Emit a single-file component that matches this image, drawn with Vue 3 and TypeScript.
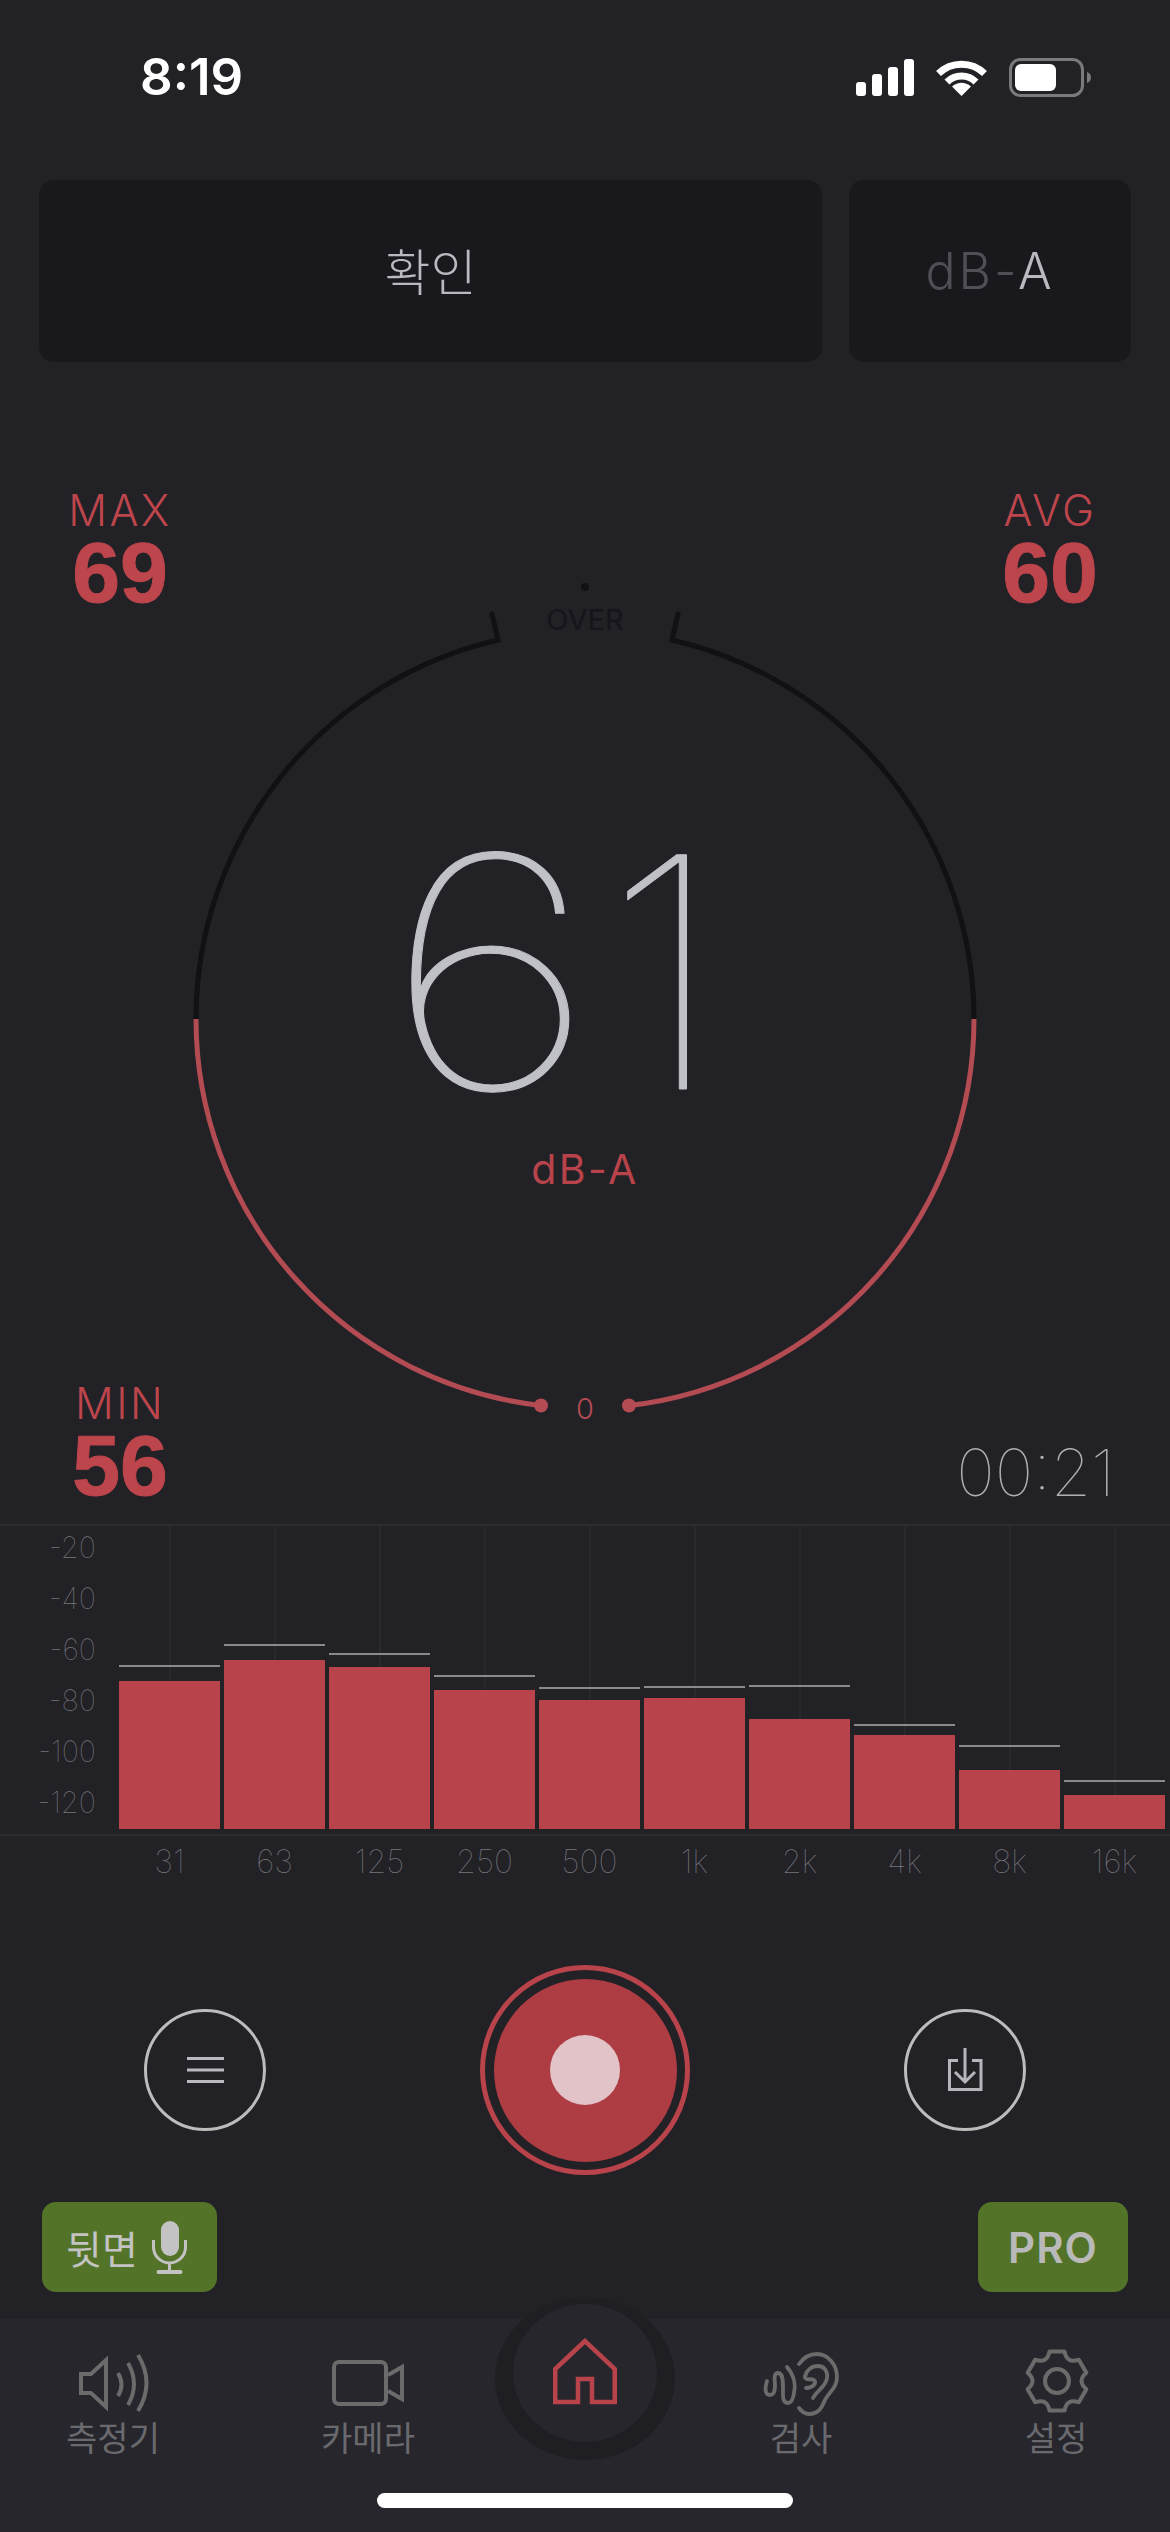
<script setup lang="ts">
interface Band {
  label: string
  level: number
  peakGap: number
}

const bands: Band[] = [
  { label: '31', level: 148, peakGap: 14 },
  { label: '63', level: 169, peakGap: 14 },
  { label: '125', level: 162, peakGap: 12 },
  { label: '250', level: 139, peakGap: 13 },
  { label: '500', level: 129, peakGap: 11 },
  { label: '1k', level: 131, peakGap: 10 },
  { label: '2k', level: 110, peakGap: 32 },
  { label: '4k', level: 94, peakGap: 9 },
  { label: '8k', level: 59, peakGap: 23 },
  { label: '16k', level: 34, peakGap: 13 },
]

const scale = ['-20', '-40', '-60', '-80', '-100', '-120']

// six flat teeth joined by curved dips, for the settings icon
function gearPath(cx: number, cy: number): string {
  const at = (angle: number, r: number) =>
    `${(cx + Math.cos(angle) * r).toFixed(1)} ${(cy + Math.sin(angle) * r).toFixed(1)}`
  const step = Math.PI / 3
  let d = ''
  for (let i = 0; i < 6; i++) {
    const a = step * i - Math.PI / 2
    d += `${i === 0 ? 'M' : 'L'}${at(a - 0.25, 30.5)} L${at(a + 0.25, 30.5)} `
    d += `Q${at(a + step / 2, 19.6)} ${at(a + step - 0.25, 30.5)} `
  }
  return d + 'Z'
}
</script>

<template>
  <div class="phone">
    <header class="status">
      <span class="time">8:19</span>
      <div class="status-icons">
        <svg width="58" height="37" viewBox="0 0 58 37" fill="#fff">
          <rect x="0" y="23" width="10" height="14" rx="3" />
          <rect x="16" y="15" width="10" height="22" rx="3" />
          <rect x="32" y="8" width="10" height="29" rx="3" />
          <rect x="48" y="0" width="10" height="37" rx="3" />
        </svg>
        <svg width="51" height="37" viewBox="0 0 51 37" fill="none" stroke="#fff" stroke-width="7">
          <path d="M2.5 14.5A33 33 0 0 1 48.5 14.5" />
          <path d="M11 23A20.5 20.5 0 0 1 40 23" />
          <path d="M25.5 37L16 27.5Q25.5 20 35 27.5Z" fill="#fff" stroke="none" />
        </svg>
        <svg width="82" height="39" viewBox="0 0 82 39" fill="none">
          <rect x="1.5" y="1.5" width="72" height="36" rx="10" stroke="#7a7a7c" stroke-width="3" />
          <rect x="6" y="6" width="41" height="27" rx="6" fill="#fff" />
          <path d="M78 14C81 15 82 17 82 19.5C82 22 81 24 78 25Z" fill="#7a7a7c" />
        </svg>
      </div>
    </header>

    <section class="toolbar">
      <button class="tool tool-wide">확인</button>
      <button class="tool tool-unit"><span class="dim">dB-</span>A</button>
    </section>

    <section class="meter">
      <svg class="dial-lines" width="1170" height="1162" viewBox="0 0 1170 1162" fill="none" stroke-width="5">
        <path d="M196 657A389 389 0 0 1 498 278L492 252" stroke="#111114" stroke-linecap="round" />
        <path d="M974 657A389 389 0 0 0 672 278L678 252" stroke="#111114" stroke-linecap="round" />
        <path d="M196 657A389 389 0 0 0 541 1043.5" stroke="#b34b52" />
        <path d="M974 657A389 389 0 0 1 629 1043.5" stroke="#b34b52" />
        <circle cx="541" cy="1043.5" r="7" fill="#b34b52" stroke="none" />
        <circle cx="629" cy="1043.5" r="7" fill="#b34b52" stroke="none" />
        <circle cx="585" cy="225" r="4" fill="#111114" stroke="none" />
      </svg>

      <div class="dial">
        <span class="over">OVER</span>
        <span class="value"><span class="value-six">6</span>1</span>
        <span class="unit">dB-A</span>
        <span class="zero">0</span>
      </div>

      <div class="readouts">
        <div class="readout-row">
          <div class="stat">
            <span class="stat-label">MAX</span>
            <span class="stat-value">69</span>
          </div>
          <div class="stat">
            <span class="stat-label">AVG</span>
            <span class="stat-value">60</span>
          </div>
        </div>
        <div class="readout-row">
          <div class="stat">
            <span class="stat-label">MIN</span>
            <span class="stat-value">56</span>
          </div>
          <span class="elapsed">00:21</span>
        </div>
      </div>
    </section>

    <section class="chart">
      <div class="plot">
        <div class="axis">
          <span v-for="tick in scale" :key="tick" class="axis-tick">{{ tick }}</span>
        </div>
        <div v-for="band in bands" :key="band.label" class="band">
          <div class="peak" :style="{ marginBottom: band.peakGap + 'px' }" />
          <div class="bar" :style="{ height: band.level + 'px' }" />
        </div>
      </div>
      <div class="freqs">
        <span v-for="band in bands" :key="band.label" class="freq">{{ band.label }}</span>
      </div>
    </section>

    <section class="controls">
      <button class="round">
        <svg width="37" height="26" viewBox="0 0 37 26" stroke="#b9b9bf" stroke-width="3">
          <path d="M0 1.5H37M0 13H37M0 24.5H37" />
        </svg>
      </button>
      <button class="record"><span class="record-core"><span class="record-dot" /></span></button>
      <button class="round">
        <svg width="40" height="50" viewBox="0 0 40 50" fill="none" stroke="#b5b5bb" stroke-width="3">
          <path d="M13 15.5H4.5V44.5H36V15.5H27" />
          <path d="M20 3V37M10 27L20 37L30 27" />
        </svg>
      </button>
    </section>

    <section class="chips">
      <button class="chip chip-mic">
        뒷면
        <svg width="35" height="53" viewBox="0 0 35 53" fill="none" stroke="#c3c3c3" stroke-width="3">
          <rect x="9" y="0" width="18" height="35" rx="9" fill="#c3c3c3" stroke="none" />
          <path d="M1.5 19V26A16 16 0 0 0 33.5 26V19M17.5 42V50" />
          <rect x="4.5" y="49" width="26" height="4" rx="2" fill="#c3c3c3" stroke="none" />
        </svg>
      </button>
      <button class="chip chip-pro">PRO</button>
    </section>

    <nav class="tabs">
      <div class="tab">
        <svg width="80" height="72" viewBox="0 0 80 72" fill="none" stroke="#6b6b6b" stroke-width="4">
          <path d="M8 29H18L33 15V62L18 48H8Z" />
          <path d="M45 28Q52 39.5 45 51M55 18Q67 39 55 60M65 10Q82 38 65 66" />
        </svg>
        <span>측정기</span>
      </div>
      <div class="tab">
        <svg width="80" height="72" viewBox="0 0 80 72" fill="none" stroke="#6b6b6b" stroke-width="4">
          <rect x="6" y="17" width="52" height="42" rx="5" />
          <path d="M60 30L74 22V54L60 46" />
        </svg>
        <span>카메라</span>
      </div>
      <div class="home">
        <div class="home-inner">
          <svg width="72" height="72" viewBox="0 0 72 72" fill="none" stroke="#b9434a" stroke-width="4.5">
            <path d="M36 4L6.25 32V65H29V42H43V65H65.75V32Z" />
          </svg>
        </div>
      </div>
      <div class="tab">
        <svg width="80" height="72" viewBox="0 0 80 72" fill="none" stroke="#6b6b6b" stroke-width="3.8" stroke-linecap="round">
          <path d="M38 19C43 12 49 9 56 9C67 9 76 20 76 32C76 43 68 47 64 55C61 62 58 69 48 69C44 69 41 67 38 63" />
          <path d="M44 32C45 25 51 21 57 21C63 21 67 26 66 33C65 42 56 45 52 53" />
          <path d="M44 32C44 36 50 33 53 35C56 38 52 43 45 43" />
          <path d="M26 22C33 30 35 40 33 48C32 55 30 58 27 58C21 58 22 50 22 44C22 36 22 28 17 28C12 28 14 36 14 41C14 47 12 50 9 50C5 50 3 46 6 36" />
        </svg>
        <span>검사</span>
      </div>
      <div class="tab">
        <svg width="80" height="72" viewBox="0 0 80 72" fill="none" stroke="#6b6b6b" stroke-width="4" stroke-linejoin="round">
          <path :d="gearPath(41, 36)" />
          <circle cx="41" cy="36" r="12" />
        </svg>
        <span>설정</span>
      </div>
      <div class="home-bar" />
    </nav>
  </div>
</template>

<style scoped>
.phone {
  width: 1170px;
  height: 2532px;
  overflow: hidden;
  background: #212126;
  font-family: Inter, "Noto Sans CJK KR", sans-serif;
}

button {
  border: none;
  padding: 0;
  font-family: inherit;
}

.status {
  height: 180px;
  box-sizing: border-box;
  padding: 56px 79px 0 140px;
  display: flex;
  justify-content: space-between;
  align-items: flex-start;
}

.time {
  color: #fff;
  font-size: 51px;
  font-weight: 600;
  line-height: 42px;
}

.status-icons {
  display: flex;
  gap: 22px;
  align-items: center;
  margin-top: 2px;
}

.toolbar {
  display: flex;
  gap: 27px;
  padding: 0 39px;
}

.tool {
  height: 182px;
  border-radius: 15px;
  background: #18181d;
  color: #b9b9bf;
  font-weight: 300;
}

.tool-wide {
  width: 783px;
  font-size: 50px;
  padding-bottom: 4px;
}

.tool-unit {
  width: 282px;
  font-size: 50px;
  letter-spacing: 3px;
}

.dim {
  color: #4f4f55;
}

.meter {
  height: 1162px;
  display: grid;
}

.dial-lines,
.dial,
.readouts {
  grid-area: 1 / 1;
}

.dial {
  display: flex;
  flex-direction: column;
  align-items: center;
  padding-top: 238px;
}

.over {
  color: #15151a;
  font-size: 29px;
  line-height: 40px;
}

.value {
  margin-top: 202px;
  margin-right: 24px;
  color: #c0c0c7;
  font-size: 322px;
  font-weight: 100;
  line-height: 260px;
  -webkit-text-stroke: 1px #c0c0c7;
}

.value-six {
  display: inline-block;
  transform: translateX(-9px) scaleX(1.16);
  transform-origin: right center;
}

.unit {
  margin-top: 42px;
  color: #b9434a;
  font-size: 41px;
  letter-spacing: 2.5px;
  line-height: 50px;
}

.zero {
  margin-top: 195px;
  color: #b34b52;
  font-size: 29px;
  font-weight: 300;
  line-height: 40px;
}

.readouts {
  display: flex;
  flex-direction: column;
  justify-content: space-between;
  padding: 125px 58px 20px 40px;
}

.readout-row {
  display: flex;
  justify-content: space-between;
  align-items: flex-end;
}

.readout-row:first-child {
  margin-right: -18px;
}

.stat {
  width: 160px;
  display: flex;
  flex-direction: column;
  align-items: center;
  color: #bd454c;
}

.stat-label {
  font-size: 43px;
  font-weight: 300;
  letter-spacing: 2.5px;
  line-height: 46px;
}

.stat-value {
  font-family: "Liberation Sans", sans-serif;
  font-size: 86px;
  font-weight: 700;
  line-height: 78px;
  -webkit-text-stroke: 1px #bd454c;
}

.elapsed {
  margin-right: -3px;
  margin-bottom: -8px;
  color: #b0b0b4;
  font-size: 65px;
  font-weight: 100;
  line-height: 78px;
}

.plot {
  height: 312px;
  box-sizing: border-box;
  display: flex;
  gap: 4px;
  padding-bottom: 5px;
  border-top: 2px solid #2b2b30;
  border-bottom: 2px solid #2b2b30;
}

.axis {
  width: 115px;
  box-sizing: border-box;
  padding-right: 19px;
  margin-top: -4px;
  display: flex;
  flex-direction: column;
  align-items: flex-end;
}

.axis-tick {
  height: 51px;
  color: #77777c;
  font-size: 29px;
  font-weight: 100;
  line-height: 51px;
}

.band {
  width: 101px;
  flex-shrink: 0;
  display: flex;
  flex-direction: column;
  justify-content: flex-end;
  background: linear-gradient(#28282d, #28282d) center / 2px 100% no-repeat;
}

.peak {
  height: 2px;
  background: #8a8a8e;
}

.bar {
  background: #b9434a;
}

.freqs {
  display: flex;
  gap: 4px;
  padding-left: 119px;
}

.freq {
  width: 101px;
  flex-shrink: 0;
  text-align: center;
  color: #77777c;
  font-size: 32px;
  font-weight: 100;
  line-height: 52px;
}

.controls {
  margin-top: 77px;
  display: flex;
  justify-content: center;
  align-items: center;
  gap: 214px;
}

.round {
  width: 122px;
  height: 122px;
  border: 3px solid #bcbcbc;
  border-radius: 50%;
  background: none;
  display: flex;
  align-items: center;
  justify-content: center;
}

.record {
  width: 210px;
  height: 210px;
  border: 5px solid #b9434a;
  border-radius: 50%;
  background: none;
  display: flex;
  align-items: center;
  justify-content: center;
}

.record-core {
  width: 183px;
  height: 183px;
  border-radius: 50%;
  background: #ad3c43;
  display: flex;
  align-items: center;
  justify-content: center;
}

.record-dot {
  width: 70px;
  height: 70px;
  border-radius: 50%;
  background: #e2c4c8;
}

.chips {
  margin-top: 27px;
  padding: 0 42px;
  display: flex;
  justify-content: space-between;
}

.chip {
  height: 90px;
  border-radius: 14px;
  background: #537328;
  display: flex;
  align-items: center;
  justify-content: center;
}

.chip-mic {
  width: 175px;
  gap: 14px;
  padding-right: 6px;
  box-sizing: border-box;
  color: #c3c3c3;
  font-size: 39px;
}

.chip-pro {
  width: 150px;
  color: #b9b9b9;
  font-size: 42px;
  font-weight: 600;
  letter-spacing: 1px;
}

.tabs {
  margin-top: 27px;
  height: 213px;
  box-sizing: border-box;
  padding-top: 26px;
  background: #26262c;
  display: grid;
  grid-template-columns: 226px 284px 150px 282px 228px;
  grid-template-rows: 116px auto;
}

.tab {
  display: flex;
  flex-direction: column;
  align-items: center;
  color: #6a6a6e;
  font-size: 34px;
  line-height: 44px;
}

.tab svg {
  display: block;
}

.home {
  justify-self: center;
  width: 180px;
  height: 163px;
  flex-shrink: 0;
  margin-top: -48px;
  border-radius: 50%;
  background: #1f1f23;
  display: flex;
  justify-content: center;
}

.home-inner {
  width: 144px;
  height: 138px;
  margin-top: 7px;
  border-radius: 50%;
  background: #26262c;
  display: flex;
  align-items: center;
  justify-content: center;
}

.home-bar {
  grid-column: 1 / -1;
  justify-self: center;
  width: 416px;
  height: 15px;
  margin-top: 32px;
  border-radius: 8px;
  background: #fff;
}
</style>

<style>
html,
body {
  margin: 0;
  background: #212126;
}
</style>
